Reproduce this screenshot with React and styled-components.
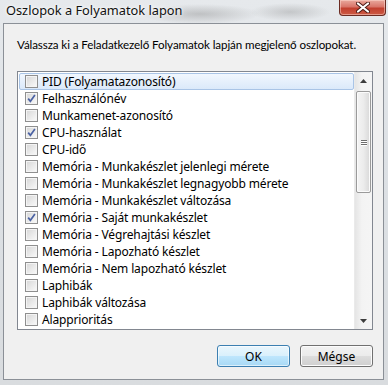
import React from "react";
import styled, { createGlobalStyle } from "styled-components";

const items = [
    { label: "PID (Folyamatazonosító)", checked: false },
    { label: "Felhasználónév", checked: true },
    { label: "Munkamenet-azonosító", checked: false },
    { label: "CPU-használat", checked: true },
    { label: "CPU-idő", checked: false },
    { label: "Memória - Munkakészlet jelenlegi mérete", checked: false },
    { label: "Memória - Munkakészlet legnagyobb mérete", checked: false },
    { label: "Memória - Munkakészlet változása", checked: false },
    { label: "Memória - Saját munkakészlet", checked: true },
    { label: "Memória - Végrehajtási készlet", checked: false },
    { label: "Memória - Lapozható készlet", checked: false },
    { label: "Memória - Nem lapozható készlet", checked: false },
    { label: "Laphibák", checked: false },
    { label: "Laphibák változása", checked: false },
    { label: "Alapprioritás", checked: false },
];

const GlobalStyle = createGlobalStyle`
    html, body {
        margin: 0;
        padding: 0;
        width: 388px;
        height: 385px;
        overflow: hidden;
        font-family: "Noto Sans", "Open Sans", sans-serif;
        font-size: 12px;
        color: #000;
    }
`;

function CheckMark() {
    return (
        <svg width="9" height="9" viewBox="0 0 9 9">
            <path d="M1.2 4.6 L3.4 7.3 L7.9 1.1" fill="none" stroke="#4b62a3" strokeWidth="1.7" />
        </svg>
    );
}

function Arrow({ down }) {
    return (
        <svg width="7" height="4" viewBox="0 0 7 4">
            <path d={down ? "M0 0 H7 L3.5 4 Z" : "M0 4 H7 L3.5 0 Z"} fill="#3c3c3c" />
        </svg>
    );
}

function App() {
    return (
        <>
            <GlobalStyle />
            <Frame>
                <TitleBar>
                    <Title>Oszlopok a Folyamatok lapon</Title>
                    <CloseButton>
                        <svg width="14" height="11" viewBox="0 0 14 11">
                            <path d="M2 1.5 L12 9.5 M12 1.5 L2 9.5" stroke="#4a1a14" strokeWidth="4" strokeLinecap="round" />
                            <path d="M2 1.5 L12 9.5 M12 1.5 L2 9.5" stroke="#fff" strokeWidth="2.2" strokeLinecap="round" />
                        </svg>
                    </CloseButton>
                </TitleBar>
                <Client>
                    <Intro>Válassza ki a Feladatkezelő Folyamatok lapján megjelenő oszlopokat.</Intro>
                    <ListBox>
                        <Rows>
                            {items.map((item, i) => (
                                <Row key={item.label} focused={i === 0}>
                                    <CheckBox>{item.checked && <CheckMark />}</CheckBox>
                                    <RowLabel>{item.label}</RowLabel>
                                </Row>
                            ))}
                        </Rows>
                        <ScrollBar>
                            <ArrowButton>
                                <Arrow />
                            </ArrowButton>
                            <Track>
                                <Thumb>
                                    <Grip>
                                        <span />
                                        <span />
                                        <span />
                                    </Grip>
                                </Thumb>
                            </Track>
                            <ArrowButton>
                                <Arrow down />
                            </ArrowButton>
                        </ScrollBar>
                    </ListBox>
                    <ButtonRow>
                        <DialogButton primary>OK</DialogButton>
                        <DialogButton>Mégse</DialogButton>
                    </ButtonRow>
                </Client>
            </Frame>
        </>
    );
}

const Frame = styled.div`
    width: 388px;
    height: 385px;
    box-sizing: border-box;
    padding: 0 4px 5px 3px;
    display: flex;
    flex-direction: column;
    background:
        radial-gradient(ellipse 60px 10px at 200px 14px, rgba(120, 120, 120, 0.35), transparent),
        radial-gradient(ellipse 40px 9px at 290px 12px, rgba(120, 120, 120, 0.3), transparent),
        linear-gradient(180deg, #e6e9ec 0%, #dde1e5 40%, #d9dcdf 100%);
`;

const TitleBar = styled.div`
    height: 23px;
    flex-shrink: 0;
    display: flex;
    justify-content: space-between;
    align-items: flex-start;
`;

const Title = styled.div`
    padding: 2px 0 0 3px;
    font-size: 12.8px;
    line-height: 17px;
    color: #111;
    text-shadow: 0 0 6px rgba(255, 255, 255, 0.9), 0 0 3px #fff;
`;

const CloseButton = styled.div`
    width: 47px;
    height: 16px;
    margin-right: -2px;
    box-sizing: border-box;
    border: 1px solid #6b2b22;
    border-top: none;
    border-radius: 0 0 4px 4px;
    background: linear-gradient(180deg, #e9a99d 0%, #d9766a 45%, #c2402f 55%, #cc5b45 100%);
    box-shadow: inset 0 0 0 1px rgba(255, 220, 210, 0.5);
    display: flex;
    align-items: center;
    justify-content: center;
`;

const Client = styled.div`
    flex: 1;
    box-sizing: border-box;
    border: 1px solid #8b9097;
    background: #f0f0f0;
    display: flex;
    flex-direction: column;
    padding: 13px 10px 12px 13px;
`;

const Intro = styled.div`
    font-family: Lato, "Noto Sans", sans-serif;
    font-size: 11.6px;
    letter-spacing: -0.1px;
    line-height: 16px;
    height: 34px;
    white-space: nowrap;
`;

const ListBox = styled.div`
    height: 259px;
    box-sizing: border-box;
    border: 1px solid #828790;
    background: #fff;
    display: flex;
    overflow: hidden;
`;

const Rows = styled.div`
    flex: 1;
    padding: 1px 0 0 1px;
    overflow: hidden;
`;

const Row = styled.div`
    height: 17px;
    box-sizing: border-box;
    display: flex;
    align-items: center;
    padding-left: 5px;
    border: 1px solid ${(p) => (p.focused ? "#a9c4e6" : "transparent")};
    border-radius: 2px;
    background: ${(p) => (p.focused ? "linear-gradient(180deg, #f1f7fe 0%, #dbe9fa 100%)" : "transparent")};
`;

const CheckBox = styled.div`
    width: 13px;
    height: 13px;
    box-sizing: border-box;
    border: 1px solid #8f8f8f;
    background: linear-gradient(135deg, #d6d6d6 0%, #ececec 60%, #fafafa 100%);
    box-shadow: inset 0 0 0 1px #f4f4f4;
    display: flex;
    align-items: center;
    justify-content: center;
    flex-shrink: 0;
`;

const RowLabel = styled.span`
    margin-left: 4px;
    white-space: nowrap;
    font-size: 12px;
    letter-spacing: -0.15px;
`;

const ScrollBar = styled.div`
    width: 17px;
    flex-shrink: 0;
    display: flex;
    flex-direction: column;
    background: linear-gradient(90deg, #e5e5e5 0%, #f3f3f3 40%, #f5f5f5 100%);
    border-left: 1px solid #eaeaea;
`;

const ArrowButton = styled.div`
    height: 17px;
    flex-shrink: 0;
    display: flex;
    align-items: center;
    justify-content: center;
`;

const Track = styled.div`
    flex: 1;
    padding: 2px 0 0;
`;

const Thumb = styled.div`
    height: 102px;
    margin: 0 1px;
    box-sizing: border-box;
    border: 1px solid #9a9a9a;
    border-radius: 2px;
    background: linear-gradient(90deg, #f4f4f4 0%, #ececec 50%, #d8d8d8 100%);
    box-shadow: inset 0 0 0 1px #fbfbfb;
    display: flex;
    align-items: center;
    justify-content: center;
`;

const Grip = styled.div`
    display: flex;
    flex-direction: column;
    gap: 1px;

    span {
        display: block;
        width: 6px;
        height: 1px;
        background: #6e6e6e;
        box-shadow: 0 1px 0 #fff;
    }
`;

const ButtonRow = styled.div`
    margin-top: auto;
    display: flex;
    justify-content: flex-end;
    gap: 10px;
`;

const DialogButton = styled.button`
    width: 73px;
    height: 22px;
    box-sizing: border-box;
    font-family: "Noto Sans", "Open Sans", sans-serif;
    font-size: 12px;
    color: #000;
    padding: 0;
    border: 1px solid ${(p) => (p.primary ? "#3c7fb1" : "#707070")};
    border-radius: 3px;
    background: ${(p) =>
        p.primary
            ? "linear-gradient(180deg, #eaf6fd 0%, #d9f0fc 50%, #bee6fd 51%, #a7d9f5 100%)"
            : "linear-gradient(180deg, #f2f2f2 0%, #ebebeb 50%, #dddddd 51%, #cfcfcf 100%)"};
    box-shadow: inset 0 0 0 1px ${(p) => (p.primary ? "rgba(255,255,255,0.6)" : "#fcfcfc")};
`;

export default App;
